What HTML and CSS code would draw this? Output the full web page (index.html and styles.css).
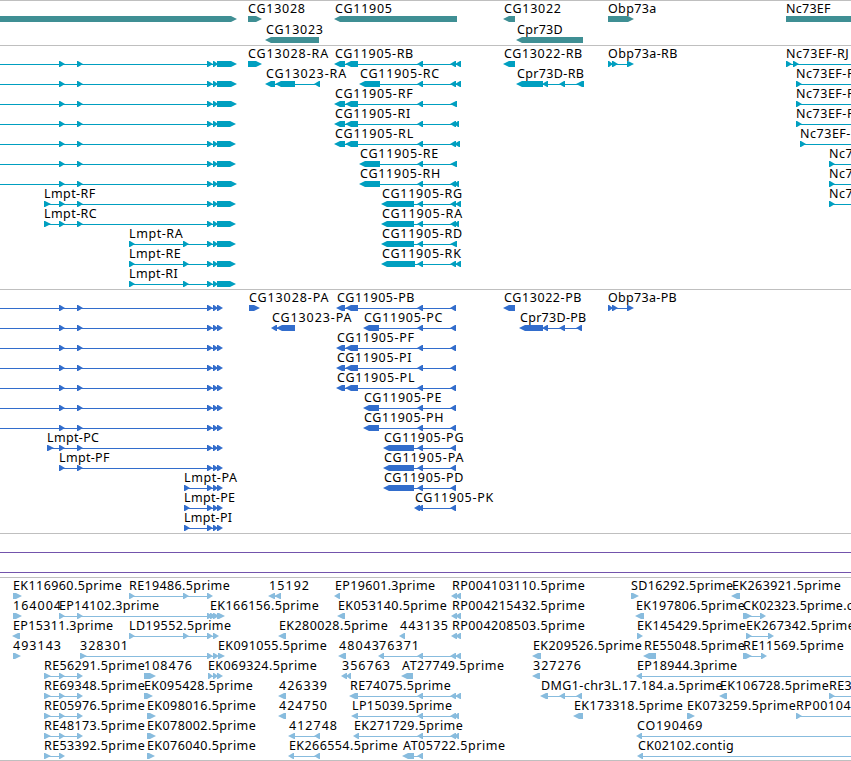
FILE: index.html
```
<!DOCTYPE html>
<html lang="en">
<head>
  <meta charset="UTF-8" />
  <title>Genome region 3L</title>
  <link rel="stylesheet" href="styles.css">
</head>
<body>

  <main class="browser">
    <section class="track genes"><svg id="genes"></svg></section>
    <section class="track transcripts"><svg id="transcripts"></svg></section>
    <section class="track cds"><svg id="cds"></svg></section>
    <section class="track spans">
      <div class="span-line"></div>
      <div class="span-line"></div>
    </section>
    <section class="track ests"><svg id="ests"></svg></section>
  </main>

  <script src="tracks.js"></script>
</body>
</html>
```

FILE: styles.css
```
* {
  margin: 0;
  padding: 0;
  box-sizing: border-box;
}

body {
  background: #fff;
  overflow: hidden;
}

.browser {
  width: 851px;
  border-bottom: 1px solid #bfbfbf;
}

.track {
  border-top: 1px solid #bfbfbf;
  overflow: hidden;
}

.track svg {
  display: block;
  width: 100%;
  height: 100%;
}

.genes {
  height: 45px;
  color: #3f8f94;
}

.transcripts {
  height: 244px;
  color: #009fc0;
}

.cds {
  height: 244px;
  color: #326dcc;
}

.ests {
  height: 183px;
  color: #88bcde;
}

.spans {
  height: 44px;
  padding-top: 18px;
  display: flex;
  flex-direction: column;
  gap: 19px;
}

.span-line {
  height: 1px;
  background: #7354ac;
}

.label {
  font-family: "Noto Sans", "DejaVu Sans", sans-serif;
  font-size: 12.5px;
  fill: #000;
}

.exon,
.intron {
  fill: currentColor;
}

.intron {
  shape-rendering: crispEdges;
}
```

FILE: tracks.js
```
const NS = "http://www.w3.org/2000/svg";

// label advances in px, digits are all 8
const ADVANCE = {
  A: 9, B: 7, C: 8, D: 9, E: 7, F: 6.5, G: 9, H: 9, I: 4, J: 4, K: 7.7, L: 7,
  M: 10.5, N: 9, O: 9.5, P: 7, R: 7.7, S: 7, T: 7,
  a: 7, b: 8, c: 6, e: 7, g: 7.5, h: 7.5, i: 3, m: 11.3, n: 7.5, o: 7.5,
  p: 7.7, r: 5, t: 4.5, ".": 4, "-": 6.5
};

function labelWidth(text) {
  let w = 0;
  for (const ch of text) w += ADVANCE[ch] || 8;
  return w;
}

function add(svg, tag, attrs) {
  const el = document.createElementNS(NS, tag);
  for (const k in attrs) el.setAttribute(k, attrs[k]);
  svg.appendChild(el);
  return el;
}

// feature: "label dir start:end start:end ..."   _ = no label
function drawFeature(svg, line, top) {
  const [label, dir, ...parts] = line.trim().split(/\s+/);
  const exons = parts.map(p => p.split(":").map(Number));
  const start = exons[0][0];
  const end = exons[exons.length - 1][1];

  if (exons.length > 1) {
    add(svg, "rect", { class: "intron", x: start + 2, y: top + 18, width: end - start - 4, height: 1 });
  }
  const y1 = top + 15;
  const mid = y1 + 3;
  const y2 = y1 + 6;
  for (const [a, b] of exons) {
    const head = Math.min(5, b - a - 1);
    const pts = dir === ">"
      ? [[a, y1], [b - head, y1], [b + 1, mid], [b - head, y2], [a, y2]]
      : [[b, y1], [a + head, y1], [a - 1, mid], [a + head, y2], [b, y2]];
    add(svg, "polygon", { class: "exon", points: pts.map(p => p.join(",")).join(" ") });
  }
  if (label !== "_") {
    const t = add(svg, "text", { class: "label", x: start, y: top + 12, textLength: labelWidth(label) });
    t.textContent = label;
  }
}

function drawTrack(id, rows, pitch) {
  const svg = document.getElementById(id);
  rows.forEach((row, i) => row.forEach(f => drawFeature(svg, f, i * pitch)));
}

const genes = [
  ["_ > -10:236", "CG13028 > 248:261", "CG11905 < 335:457", "CG13022 < 504:515", "Obp73a > 608:633", "Nc73EF > 786:870"],
  ["CG13023 < 266:319", "Cpr73D < 517:583"]
];

const lmptR = "207:212 213:217 217:236";
const lmptR2 = "207:212 213:217 217:235";
const transcripts = [
  [`_ > -10:-5 59:64 77:82 ${lmptR}`, "CG13028-RA > 248:261", "CG11905-RB < 335:345 346:358 418:423 451:456 456:461",
    "CG13022-RB < 504:515", "Obp73a-RB > 608:612 612:617 627:633", "Nc73EF-RJ > 786:791 793:798 860:865"],
  [`_ > -10:-5 59:64 77:82 ${lmptR}`, "CG13023-RA < 266:275 276:295 315:320", "CG11905-RC < 360:380 418:423 451:456 456:461",
    "Cpr73D-RB < 517:543 543:548 560:565 577:584", "Nc73EF-R > 796:801 860:865"],
  [`_ > -10:-5 59:64 77:82 ${lmptR}`, "CG11905-RF < 335:345 346:358 418:423 451:457", "Nc73EF-R > 796:801 860:865"],
  [`_ > -10:-5 59:64 77:82 ${lmptR2}`, "CG11905-RI < 335:345 346:358 418:423 451:456 455:459", "Nc73EF-R > 796:801 860:865"],
  [`_ > -10:-5 59:64 77:82 ${lmptR2}`, "CG11905-RL < 335:345 346:358 418:423 451:456 455:460", "Nc73EF-R > 800:805 860:865"],
  [`_ > -10:-5 59:64 77:82 ${lmptR2}`, "CG11905-RE < 360:380 418:423 451:457", "Nc73EF-R > 829:834 860:865"],
  [`_ > -10:-5 59:64 77:82 ${lmptR}`, "CG11905-RH < 360:380 418:423 451:456 455:459", "Nc73EF-R > 829:834 860:865"],
  [`Lmpt-RF > 44:50 59:64 77:82 ${lmptR2}`, "CG11905-RG < 382:414 418:423 451:456 456:461", "Nc73EF-R > 829:834 860:865"],
  [`Lmpt-RC > 44:50 59:64 77:82 ${lmptR2}`, "CG11905-RA < 382:414 418:423 451:456 455:459"],
  [`Lmpt-RA > 129:134 183:188 ${lmptR2}`, "CG11905-RD < 382:414 418:423 451:457"],
  [`Lmpt-RE > 129:134 183:188 ${lmptR2}`, "CG11905-RK < 382:415 418:423 451:456 456:461"],
  [`Lmpt-RI > 129:134 183:188 ${lmptR2}`]
];

const lmptP = "207:212 213:217 217:222";
const cds = [
  [`_ > -10:-5 59:64 77:82 ${lmptP}`, "CG13028-PA > 249:259", "CG11905-PB < 337:345 346:358 418:423 451:456",
    "CG13022-PB < 504:515", "Obp73a-PB > 608:612 612:617 627:633"],
  [`_ > -10:-5 59:64 77:82 ${lmptP}`, "CG13023-PA < 272:277 277:295", "CG11905-PC < 364:379 418:423 451:456",
    "Cpr73D-PB < 520:543 543:548 560:565 577:582"],
  [`_ > -10:-5 59:64 77:82 ${lmptP}`, "CG11905-PF < 337:345 346:358 418:423 451:456"],
  [`_ > -10:-5 59:64 77:82 ${lmptP}`, "CG11905-PI < 337:345 346:358 418:423 451:456"],
  [`_ > -10:-5 59:64 77:82 ${lmptP}`, "CG11905-PL < 337:345 346:358 418:423 451:456"],
  [`_ > -10:-5 59:64 77:82 ${lmptP}`, "CG11905-PE < 364:379 418:423 451:456"],
  [`_ > -10:-5 59:64 77:82 ${lmptP}`, "CG11905-PH < 364:379 418:423 451:456"],
  [`Lmpt-PC > 47:53 59:64 77:82 ${lmptP}`, "CG11905-PG < 384:414 418:423 451:456"],
  [`Lmpt-PF > 59:64 77:82 ${lmptP}`, "CG11905-PA < 384:414 418:423 451:456"],
  [`Lmpt-PA > 184:189 ${lmptP}`, "CG11905-PD < 384:414 418:423 451:456"],
  [`Lmpt-PE > 184:189 ${lmptP}`, "CG11905-PK < 415:420 418:423 451:456"],
  [`Lmpt-PI > 184:189 ${lmptP}`]
];

const ests = [
  ["EK116960.5prime > 13:21", "RE19486.5prime > 129:134 183:188 207:212", "15192 < 269:275 275:281", "EP19601.3prime < 335:340",
    "RP004103110.5prime < 452:457 456:461", "SD16292.5prime > 631:638", "EK263921.5prime < 732:740"],
  ["164004 > 13:21", "EP14102.3prime > 59:64 77:82 207:212", "EK166156.5prime > 210:215 213:218 217:224", "EK053140.5prime < 338:345",
    "RP004215432.5prime < 452:457 456:461", "EK197806.5prime < 636:644", "CK02323.5prime.contig > 743:751 760:765"],
  ["EP15311.3prime < 13:20", "LD19552.5prime > 129:134 183:188 207:212 213:218", "EK280028.5prime < 279:286", "443135 < 400:405",
    "RP004208503.5prime < 452:457 456:461", "EK145429.5prime > 637:642", "EK267342.5prime > 746:751 768:773"],
  ["493143 > 13:20", "328301 > 80:86 207:212 213:218", "EK091055.5prime > 218:224", "48043 < 339:346", "76371 < 379:384 418:423 451:456 456:461",
    "EK209526.5prime < 533:541", "RE55048.5prime < 644:656", "RE11569.5prime > 743:751 761:766"],
  ["RE56291.5prime > 44:50 59:64 77:82", "108476 > 144:155", "EK069324.5prime > 208:212 213:217 217:222", "356763 < 342:347 347:351",
    "AT27749.5prime < 402:413", "327276 < 533:540", "EP18944.3prime < 637:642 860:865"],
  ["RE69348.5prime > 44:50 59:64 77:82", "EK095428.5prime > 144:152", "426339 < 279:286", "RE74075.5prime < 350:358 418:423 451:456 456:461",
    "DMG1-chr3L.17.184.a.5prime < 541:548 560:565 577:582", "EK106728.5prime < 720:727", "RE3 > 829:834 860:865"],
  ["RE05976.5prime > 44:50 59:64 77:82", "EK098016.5prime > 147:155", "424750 < 279:286", "LP15039.5prime < 352:358 418:423 451:456 455:459",
    "EK173318.5prime < 574:583", "EK073259.5prime > 687:694", "RP00104 > 796:801 860:865"],
  ["RE48173.5prime > 44:50 59:64 77:82", "EK078002.5prime > 147:155", "412748 < 289:295 315:320", "EK271729.5prime < 354:359 418:423 451:456 455:459",
    "CO190469 < 637:642 860:865"],
  ["RE53392.5prime > 44:50 59:64", "EK076040.5prime > 147:154", "EK266554.5prime < 289:294 315:320", "AT05722.5prime < 403:414 418:423",
    "CK02102.contig < 638:643 860:865"]
];

drawTrack("genes", genes, 21);
drawTrack("transcripts", transcripts, 20);
drawTrack("cds", cds, 20);
drawTrack("ests", ests, 20);
```
